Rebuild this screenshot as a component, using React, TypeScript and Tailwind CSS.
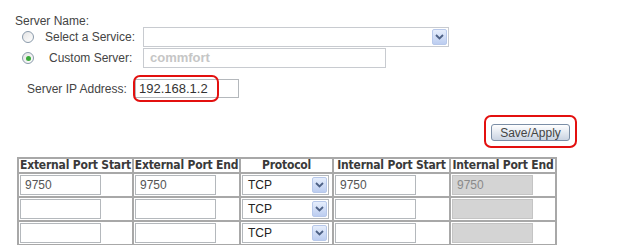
import React from "react";

const Chevron = () => (
  <svg width="9" height="6" viewBox="0 0 9 6">
    <path d="M1 1 L4.5 4.5 L8 1" fill="none" stroke="#4d6185" strokeWidth="1.8" />
  </svg>
);

function DropButton() {
  return (
    <div className="flex h-[16px] w-[15px] shrink-0 items-center justify-center rounded-[2px] border border-[#b7c8ea] bg-gradient-to-b from-[#e6eefc] to-[#bccdf0]">
      <Chevron />
    </div>
  );
}

function Radio({ checked }: { checked?: boolean }) {
  return (
    <div className="flex h-[12px] w-[12px] shrink-0 items-center justify-center rounded-full border border-[#8a9aab] bg-gradient-to-br from-[#e4e4e4] to-white">
      {checked && <div className="h-[5px] w-[5px] rounded-full bg-[#3aa93a]" />}
    </div>
  );
}

function TextBox({ value, disabled }: { value?: string; disabled?: boolean }) {
  return (
    <div
      className={
        disabled
          ? "flex h-[20px] w-[81px] items-center border border-[#c4c4c4] bg-[#d4d4d4] pl-[4px] text-[#8a8a8a]"
          : "flex h-[20px] w-[81px] items-center border border-[#b4b8bc] bg-white pl-[4px] text-[#555]"
      }
    >
      {value}
    </div>
  );
}

function ProtoSelect() {
  return (
    <div className="flex h-[20px] w-[87px] items-center justify-between border border-[#b4b8bc] bg-white pl-[5px] pr-[1px] text-[#222]">
      <span>TCP</span>
      <DropButton />
    </div>
  );
}

const headers = [
  { label: "External Port Start", w: "w-[115px]" },
  { label: "External Port End", w: "w-[107px]" },
  { label: "Protocol", w: "w-[93px]" },
  { label: "Internal Port Start", w: "w-[117px]" },
  { label: "Internal Port End", w: "w-[106px]" },
];

const rows = [
  { ext: "9750", extEnd: "9750", int: "9750", intEnd: "9750" },
  { ext: "", extEnd: "", int: "", intEnd: "" },
  { ext: "", extEnd: "", int: "", intEnd: "" },
];

export default function App() {
  return (
    <div className="h-[245px] w-[623px] overflow-hidden bg-white font-['Liberation_Sans',Arial,sans-serif] text-[12px] text-[#444]">
      <div className="pl-[15px] pt-[14px] leading-[14px]">Server Name:</div>

      <div className="mt-[-1px] grid grid-cols-[22px_12px_109px_auto] grid-rows-[20px_20px] items-center gap-y-[1px]">
        <div />
        <Radio />
        <span className="whitespace-nowrap pl-[11px]">Select a Service:</span>
        <div className="flex h-[20px] w-[306px] items-center justify-end border border-[#c8cbd0] bg-white pr-[1px]">
          <DropButton />
        </div>

        <div />
        <Radio checked />
        <span className="whitespace-nowrap pl-[15px]">Custom Server:</span>
        <div className="flex h-[20px] w-[243px] items-center border border-[#c8cbd0] bg-white pl-[6px] text-[13px] font-bold text-[#c6c6c6]">
          commfort
        </div>
      </div>

      <div className="mt-[11px] flex h-[19px] items-center">
        <span className="w-[135px] shrink-0 whitespace-nowrap pl-[27px]">Server IP Address:</span>
        <div className="relative">
          <div className="flex h-[19px] w-[104px] items-center border border-[#b4b8bc] bg-white pl-[3px] text-[13px] text-[#333]">
            192.168.1.2
          </div>
          <div className="absolute left-[-2px] top-[-4px] h-[27px] w-[86px] rounded-[7px] border-2 border-[#e3100f]" />
        </div>
      </div>

      <div className="mt-[26px] flex justify-end pr-[53px]">
        <div className="relative">
          <button className="flex h-[17px] w-[79px] items-center justify-center rounded-[3px] border border-[#7b8ea6] bg-gradient-to-b from-white to-[#c9d3e2] text-[12px] leading-none text-[#444]">
            Save/Apply
          </button>
          <div className="absolute left-[-7px] top-[-9px] h-[33px] w-[93px] rounded-[7px] border-2 border-[#e3100f]" />
        </div>
      </div>

      <table className="ml-[17px] mt-[16px] table-fixed border-separate border-spacing-0 border border-[#a8a8a8]">
        <thead>
          <tr>
            {headers.map((h) => (
              <th
                key={h.label}
                className={`${h.w} h-[15px] overflow-hidden border border-[#a8a8a8] p-0 text-center font-['DejaVu_Sans_Condensed','DejaVu_Sans',sans-serif] text-[12px] font-bold leading-[13px] tracking-[-0.2px] whitespace-nowrap text-[#3a3a3a]`}
              >
                {h.label}
              </th>
            ))}
          </tr>
        </thead>
        <tbody>
          {rows.map((r, i) => (
            <tr key={i}>
              <td className="h-[24px] border border-[#a8a8a8] px-[1px] py-0">
                <TextBox value={r.ext} />
              </td>
              <td className="h-[24px] border border-[#a8a8a8] px-[1px] py-0">
                <TextBox value={r.extEnd} />
              </td>
              <td className="h-[24px] border border-[#a8a8a8] px-[1px] py-0">
                <ProtoSelect />
              </td>
              <td className="h-[24px] border border-[#a8a8a8] px-[1px] py-0">
                <TextBox value={r.int} />
              </td>
              <td className="h-[24px] border border-[#a8a8a8] px-[1px] py-0">
                <TextBox value={r.intEnd} disabled />
              </td>
            </tr>
          ))}
        </tbody>
      </table>
    </div>
  );
}
